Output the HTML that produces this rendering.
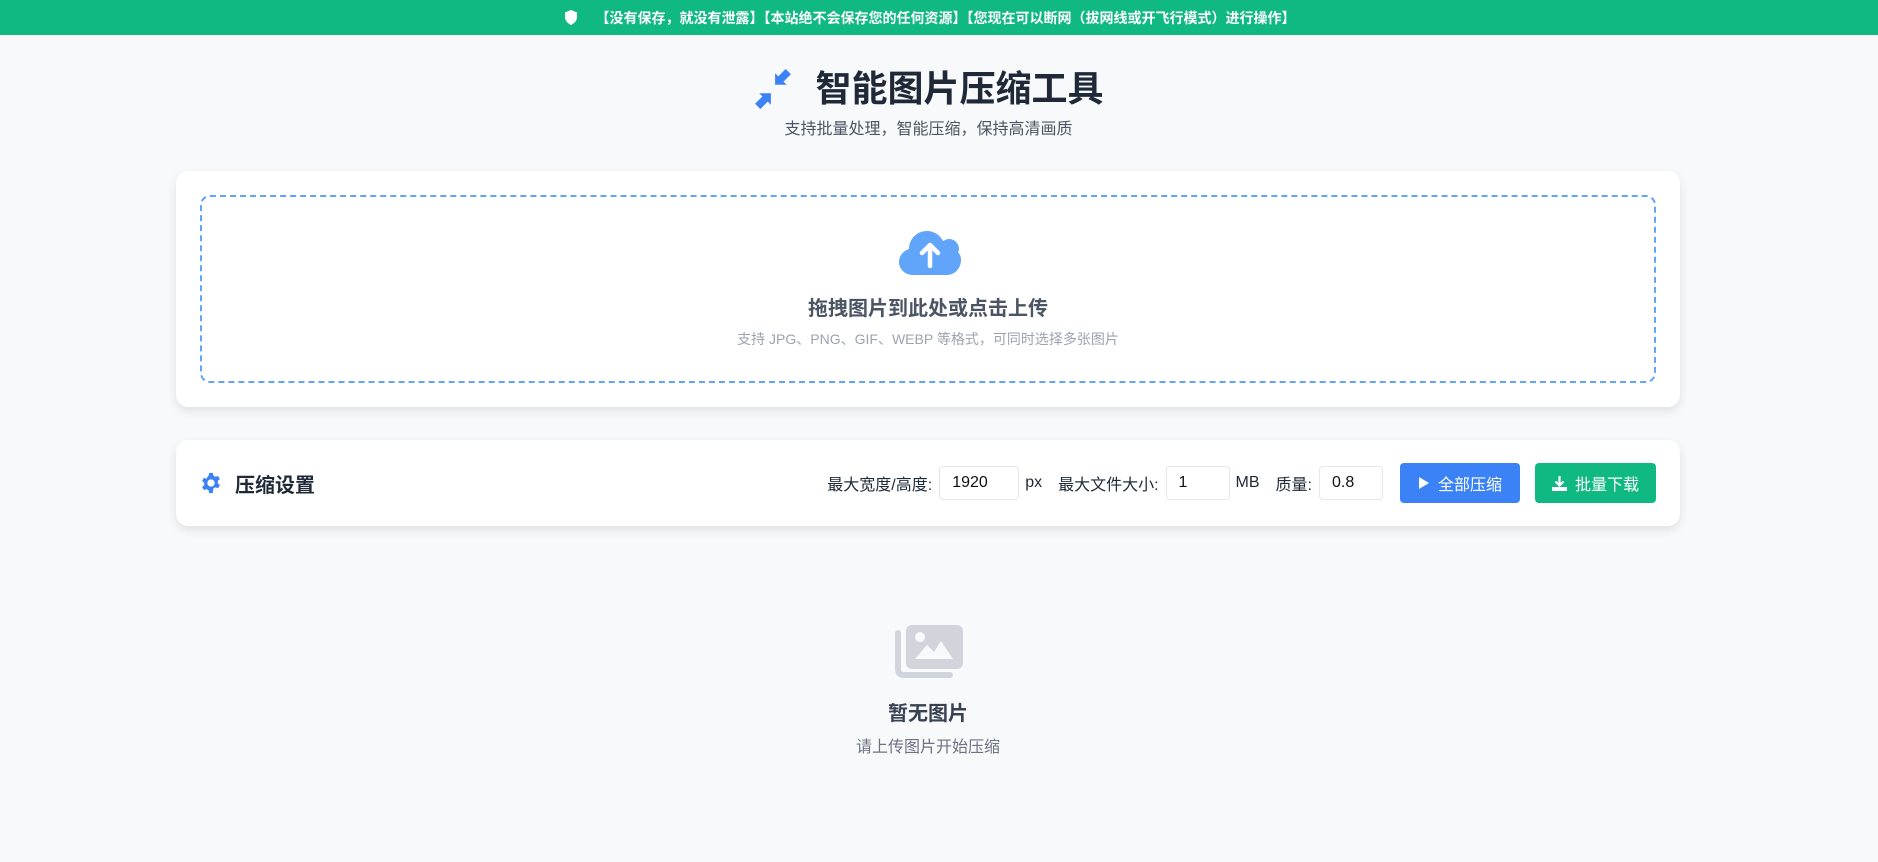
<!DOCTYPE html>
<html><head><meta charset="utf-8"><style>
*{box-sizing:border-box;margin:0;padding:0}
body{width:1878px;height:862px;background:#f8f9fb;font-family:"Liberation Sans","Noto Sans CJK SC",sans-serif;position:relative;overflow:hidden;color:#1f2937}
.banner{height:35px;background:#10b981;color:#fff;font-size:14px;font-weight:bold;display:flex;align-items:center;justify-content:center;gap:18px;padding-right:19px}
.title{position:absolute;top:64px;left:0;width:1857px;display:flex;justify-content:center;align-items:center;gap:22px}
.title h1{font-size:36px;font-weight:bold;color:#1f2937;line-height:50px}
.sub{position:absolute;top:115px;width:1857px;text-align:center;font-size:16px;color:#4b5563}
.card{position:absolute;left:176px;width:1504px;background:#fff;border-radius:12px;box-shadow:0 4px 10px rgba(0,0,0,.1)}
.up{top:171px;height:236px;padding:24px}
.dash{height:188px;border:2px dashed #60a5fa;border-radius:10px;text-align:center;position:relative}
.set{top:440px;height:86px;display:flex;align-items:center;padding:0 24px 0 24px}
.lbl{font-size:16px;color:#1f2937}
.inp{height:34px;border:1px solid #e5e7eb;border-radius:4px;font-size:16px;display:flex;align-items:center;padding-left:12px;color:#111}
.btn{height:40px;border-radius:4px;color:#fff;font-size:16px;display:flex;align-items:center;justify-content:center;gap:8px}
</style></head><body>
<div class="banner"><svg width="14" height="15" viewBox="0 0 14 15"><path d="M7 0L13 2.5V7C13 11 10 13.5 7 15C4 13.5 1 11 1 7V2.5Z" fill="#fff"/></svg><span>【没有保存，就没有泄露】【本站绝不会保存您的任何资源】【您现在可以断网（拔网线或开飞行模式）进行操作】</span></div>
<div class="title"><svg width="40" height="40" viewBox="0 0 38 38"><g fill="#3b82f6"><path d="M36 5L31 0L24 7L21 4V15H32L29 12Z"/><path d="M2 33L7 38L14 31L17 34V23H6L9 26Z"/></g></svg><h1>智能图片压缩工具</h1></div>
<div class="sub">支持批量处理，智能压缩，保持高清画质</div>
<div class="card up"><div class="dash">
<svg style="position:absolute;left:697px;top:34px" width="62" height="44" viewBox="0 0 62 44"><path d="M14 44C6 44 0 38 0 31C0 25 4 20 10 18C10 8 18 0 28 0C35 0 41 4 44 10C46 9 48 8 50 8C56 8 60 13 60 18C60 19 60 20 59 21C61 23 62 26 62 29C62 37 56 44 48 44Z" fill="#60a5fa"/><path d="M31 35V15M23 22L31 14L39 22" stroke="#fff" stroke-width="4.5" fill="none" stroke-linecap="round" stroke-linejoin="round"/></svg>
<div style="position:absolute;top:95px;width:100%;font-size:20px;font-weight:bold;color:#4b5563">拖拽图片到此处或点击上传</div>
<div style="position:absolute;top:132px;width:100%;font-size:14px;color:#9ca3af">支持 JPG、PNG、GIF、WEBP 等格式，可同时选择多张图片</div>
</div></div>
<div class="card set">
<svg width="22" height="22" viewBox="0 0 24 24"><path fill="#3b82f6" d="M10 1h4l.6 3a8 8 0 0 1 2.2 1.3l2.9-1 2 3.4-2.3 2a8 8 0 0 1 0 2.6l2.3 2-2 3.4-2.9-1a8 8 0 0 1-2.2 1.3L14 23h-4l-.6-3a8 8 0 0 1-2.2-1.3l-2.9 1-2-3.4 2.3-2a8 8 0 0 1 0-2.6l-2.3-2 2-3.4 2.9 1A8 8 0 0 1 9.4 4ZM12 8a4 4 0 1 0 0 8 4 4 0 1 0 0-8Z"/></svg>
<span style="font-size:20px;font-weight:bold;margin-left:13px">压缩设置</span>
<div style="margin-left:auto;display:flex;align-items:center">
<span class="lbl">最大宽度/高度:</span><div class="inp" style="width:80px;margin-left:7px">1920</div><span class="lbl" style="margin-left:6px">px</span>
<span class="lbl" style="margin-left:16px">最大文件大小:</span><div class="inp" style="width:64px;margin-left:7px">1</div><span class="lbl" style="margin-left:6px">MB</span>
<span class="lbl" style="margin-left:16px">质量:</span><div class="inp" style="width:64px;margin-left:7px">0.8</div>
<div class="btn" style="background:#3b82f6;width:120px;margin-left:17px"><svg width="12" height="14" viewBox="0 0 12 14"><path d="M1 1L11 7L1 13Z" fill="#fff"/></svg>全部压缩</div>
<div class="btn" style="background:#10b981;width:121px;margin-left:15px"><svg width="15" height="15" viewBox="0 0 15 15"><path d="M7.5 0V9M3.5 5.5L7.5 9.5L11.5 5.5" stroke="#fff" stroke-width="2.2" fill="none"/><path d="M0 11H15V15H0Z" fill="#fff"/></svg>批量下载</div>
</div></div>
<svg style="position:absolute;left:894px;top:625px" width="69" height="54" viewBox="0 0 69 54"><path d="M4 8V44Q4 50 10 50H56" stroke="#d1d5db" stroke-width="6" fill="none" stroke-linecap="round"/><rect x="12" y="0" width="57" height="44" rx="6" fill="#d1d5db"/><circle cx="26" cy="12" r="5" fill="#f8f9fb"/><path d="M21 34L33 20L40 27L47 16L59 34Z" fill="#f8f9fb"/></svg>
<div style="position:absolute;top:697px;left:-11px;width:100%;text-align:center;font-size:20px;font-weight:bold;color:#374151">暂无图片</div>
<div style="position:absolute;top:733px;left:-11px;width:100%;text-align:center;font-size:16px;color:#6b7280">请上传图片开始压缩</div>
</body></html>
